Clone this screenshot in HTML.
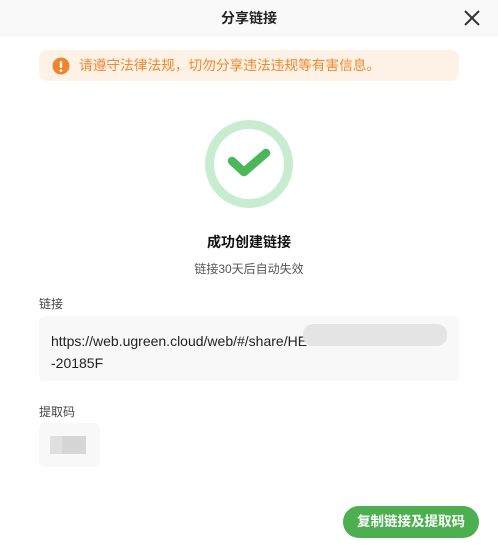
<!DOCTYPE html>
<html><head><meta charset="utf-8"><style>
*{margin:0;padding:0;box-sizing:border-box}
body{width:498px;height:556px;background:#fff;font-family:"Liberation Sans","Noto Sans CJK SC",sans-serif;position:relative;overflow:hidden}
.a{position:absolute}
</style></head><body>
<div class="a" style="left:0;top:0;width:498px;height:37px;background:#f9f9f9"></div>
<div class="a" style="left:0;top:9px;width:498px;text-align:center;font-size:14px;font-weight:bold;color:#222;line-height:18px">分享链接</div>
<svg class="a" style="left:463px;top:9px" width="18" height="18"><path d="M2 2L16 16M16 2L2 16" stroke="#333" stroke-width="2"/></svg>
<div class="a" style="left:39px;top:50px;width:420px;height:31px;background:#fef1e6;border-radius:8px"></div>
<svg class="a" style="left:52px;top:57px" width="18" height="18"><circle cx="9" cy="9" r="8.5" fill="#ef842c"/><rect x="7.8" y="4" width="2.4" height="7" rx="1" fill="#fff"/><circle cx="9" cy="13.6" r="1.3" fill="#fff"/></svg>
<div class="a" style="left:79px;top:57px;font-size:13.7px;color:#f0892e;line-height:18px">请遵守法律法规，切勿分享违法违规等有害信息。</div>
<svg class="a" style="left:200px;top:115px" width="98" height="98"><circle cx="49" cy="49" r="39.5" fill="none" stroke="#c8ecd0" stroke-width="9"/><path d="M32 46L44 57L66 38" fill="none" stroke="#4cb75a" stroke-width="8.5" stroke-linecap="round" stroke-linejoin="round"/></svg>
<div class="a" style="left:0;top:232px;width:498px;text-align:center;font-size:14px;font-weight:bold;color:#111">成功创建链接</div>
<div class="a" style="left:0;top:260px;width:498px;text-align:center;font-size:12px;color:#555">链接30天后自动失效</div>
<div class="a" style="left:39px;top:295px;font-size:12px;color:#444">链接</div>
<div class="a" style="left:39px;top:316px;width:420px;height:65px;background:#f8f8f8;border-radius:6px"></div>
<div class="a" style="left:51px;top:330px;font-size:14px;color:#222;line-height:22px">https://web.ugreen.cloud/web/#/share/HE<br>-20185F</div>
<div class="a" style="left:303px;top:324px;width:144px;height:22px;background:#e4e4e4;border-radius:10px"></div>
<div class="a" style="left:39px;top:403px;font-size:12px;color:#444">提取码</div>
<div class="a" style="left:39px;top:423px;width:61px;height:44px;background:#f8f8f8;border-radius:6px"></div>
<div class="a" style="left:50px;top:436px;width:18px;height:18px;background:#e0e0e0"></div>
<div class="a" style="left:62px;top:436px;width:24px;height:18px;background:#d6d6d6"></div>
<div class="a" style="left:343px;top:506px;width:136px;height:32px;background:#4caf50;border-radius:16px;color:#fff;font-size:13.5px;font-weight:bold;text-align:center;line-height:32px">复制链接及提取码</div>
</body></html>
